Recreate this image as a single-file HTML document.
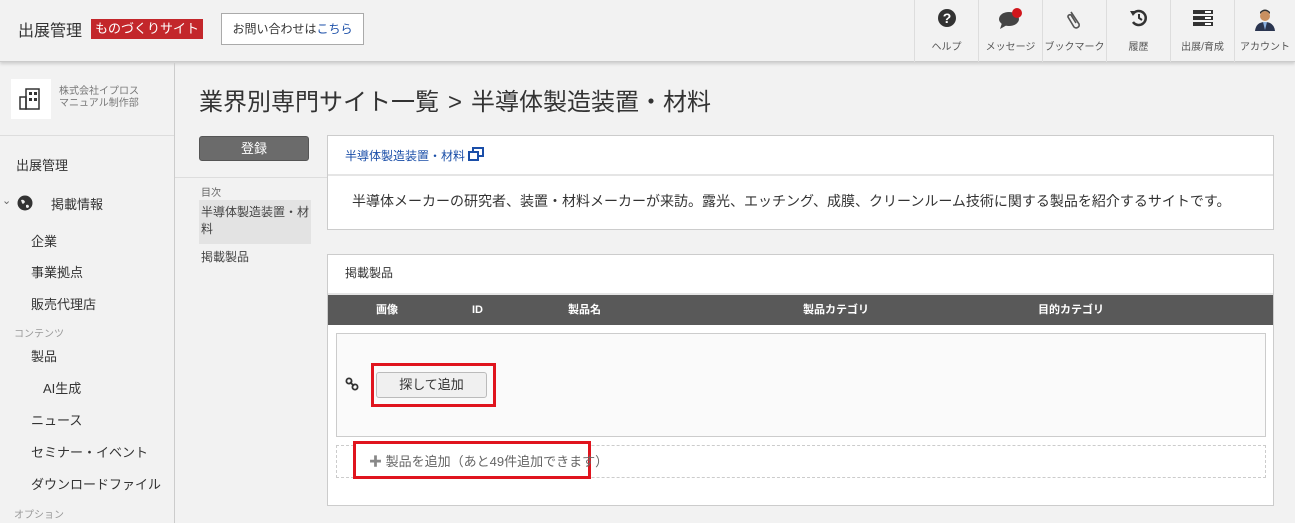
<!DOCTYPE html><html><head><meta charset="utf-8"><style>
*{margin:0;padding:0;box-sizing:border-box}
body{width:1295px;height:523px;overflow:hidden;background:#f2f2f2;font-family:"Liberation Sans","Noto Sans CJK JP",sans-serif;color:#333;position:relative}
.a{position:absolute;white-space:nowrap}
.hdr{left:0;top:0;width:1295px;height:62px;background:#f2f2f2;border-bottom:1px solid #ccc;box-shadow:0 2px 3px rgba(0,0,0,.15)}
.nav{top:0;height:62px;width:64px;border-left:1px solid #ddd;text-align:center;font-size:10px;color:#555}
.nav svg{position:absolute;left:50%;transform:translateX(-50%);top:8px}
.nav span{position:absolute;left:0;right:0;top:38px}
.side{font-size:13px;color:#333}
.panel{background:#fff;border:1px solid #ccc}
</style></head><body>
<div class="a hdr"></div>
<div class="a" style="left:18px;top:17px;font-size:16px;color:#333">出展管理</div>
<div class="a" style="left:91px;top:19px;width:112px;height:20px;background:#c3272b;color:#fff;font-size:13px;line-height:20px;text-align:center">ものづくりサイト</div>
<div class="a" style="left:221px;top:13px;width:143px;height:32px;background:#fff;border:1px solid #aaa;font-size:12px;line-height:30px;text-align:center;color:#333">お問い合わせは<span style="color:#1a4ea8">こちら</span></div>

<div class="a nav" style="left:914px"><svg width="20" height="20" viewBox="0 0 20 20"><circle cx="10" cy="10" r="9" fill="#333"/><text x="10" y="15" font-size="14" font-weight="bold" fill="#fff" text-anchor="middle" font-family="Liberation Sans">?</text></svg><span>ヘルプ</span></div>
<div class="a nav" style="left:978px"><svg width="26" height="22" viewBox="0 0 26 22"><ellipse cx="11" cy="11" rx="10" ry="7" fill="#444"/><path d="M4 15 L2 21 L9 17Z" fill="#444"/><circle cx="19" cy="5" r="5" fill="#d0161b"/></svg><span>メッセージ</span></div>
<div class="a nav" style="left:1042px"><svg width="20" height="22" viewBox="0 0 20 22"><path d="M6 4 L14 16 a3 3 0 0 1 -5 3 L3 9 a2 2 0 0 1 3 -2 L11 15" fill="none" stroke="#555" stroke-width="1.6"/></svg><span>ブックマーク</span></div>
<div class="a nav" style="left:1106px"><svg width="20" height="20" viewBox="0 0 20 20"><path d="M4 6 A7 7 0 1 1 4 14" fill="none" stroke="#333" stroke-width="2.5"/><path d="M1 3 L7 3 L4 8Z" fill="#333"/><path d="M10 6 V10 L13 12" fill="none" stroke="#333" stroke-width="2"/></svg><span>履歴</span></div>
<div class="a nav" style="left:1170px"><svg width="22" height="20" viewBox="0 0 22 20"><rect x="1" y="2" width="20" height="4" fill="#333"/><rect x="1" y="8" width="20" height="4" fill="#333"/><rect x="1" y="14" width="20" height="4" fill="#333"/><rect x="13" y="3" width="6" height="2" fill="#fff"/><rect x="13" y="9" width="6" height="2" fill="#fff"/><rect x="13" y="15" width="6" height="2" fill="#fff"/></svg><span>出展/育成</span></div>
<div class="a nav" style="left:1234px;width:61px"><svg width="24" height="24" viewBox="0 0 24 24"><circle cx="12" cy="8" r="5" fill="#c99060"/><path d="M7 6 Q12 0 17 6 L17 4 Q12 -1 7 4Z" fill="#333"/><path d="M2 23 Q3 14 12 14 Q21 14 22 23Z" fill="#2a3550"/><path d="M10 14 L12 22 L14 14Z" fill="#8ab0e0"/></svg><span>アカウント</span></div>

<div class="a" style="left:174px;top:63px;width:1px;height:460px;background:#ccc"></div>
<div class="a" style="left:11px;top:79px;width:40px;height:40px;background:#fff"><svg width="40" height="40" viewBox="0 0 40 40"><rect x="15" y="10" width="13" height="20" fill="none" stroke="#333" stroke-width="1.5"/><rect x="9" y="18" width="6" height="12" fill="none" stroke="#333" stroke-width="1.5"/><g fill="#333"><rect x="18" y="13" width="3" height="3"/><rect x="23" y="13" width="3" height="3"/><rect x="18" y="19" width="3" height="3"/><rect x="23" y="19" width="3" height="3"/></g></svg></div>
<div class="a" style="left:59px;top:86px;font-size:10px;color:#777;line-height:12px">株式会社イプロス<br>マニュアル制作部</div>
<div class="a" style="left:0;top:135px;width:174px;height:1px;background:#ddd"></div>
<div class="a side" style="left:16px;top:155px">出展管理</div>
<div class="a side" style="left:2px;top:194px;font-size:11px;color:#666">⌄</div>
<svg class="a" style="left:17px;top:195px" width="16" height="16" viewBox="0 0 16 16"><circle cx="8" cy="8" r="7.5" fill="#333"/><path d="M4 5 Q7 4 8 7 Q6 10 5 8Z M9 10 Q12 9 12 12 Q10 14 9 12Z" fill="#eee"/></svg>
<div class="a side" style="left:51px;top:194px">掲載情報</div>
<div class="a side" style="left:31px;top:231px">企業</div>
<div class="a side" style="left:31px;top:262px">事業拠点</div>
<div class="a side" style="left:31px;top:294px">販売代理店</div>
<div class="a" style="left:14px;top:325px;font-size:10px;color:#999">コンテンツ</div>
<div class="a side" style="left:31px;top:346px">製品</div>
<div class="a side" style="left:43px;top:378px">AI生成</div>
<div class="a side" style="left:31px;top:410px">ニュース</div>
<div class="a side" style="left:31px;top:442px">セミナー・イベント</div>
<div class="a side" style="left:31px;top:474px">ダウンロードファイル</div>
<div class="a" style="left:14px;top:506px;font-size:10px;color:#999">オプション</div>

<div class="a" style="left:199px;top:82px;font-size:24px;color:#333">業界別専門サイト一覧<span style="margin:0 9px">&gt;</span>半導体製造装置・材料</div>
<div class="a" style="left:199px;top:136px;width:110px;height:25px;background:#6b6b6b;border:1px solid #555;border-radius:3px;color:#fff;font-size:13px;line-height:23px;text-align:center">登録</div>
<div class="a" style="left:175px;top:177px;width:152px;height:1px;background:#ddd"></div>
<div class="a" style="left:201px;top:184px;font-size:10px;color:#666">目次</div>
<div class="a" style="left:199px;top:200px;width:112px;height:44px;background:#e3e3e3"></div>
<div class="a" style="left:201px;top:204px;font-size:12px;line-height:17px;color:#444;white-space:normal;width:108px">半導体製造装置・材料</div>
<div class="a" style="left:201px;top:248px;font-size:12px;color:#444">掲載製品</div>

<div class="a panel" style="left:327px;top:135px;width:947px;height:95px"></div>
<div class="a" style="left:328px;top:174px;width:945px;height:2px;background:#e5e5e5"></div>
<div class="a" style="left:345px;top:147px;font-size:12px;color:#1a4ea8">半導体製造装置・材料</div>
<svg class="a" style="left:468px;top:147px" width="16" height="14" viewBox="0 0 16 14"><rect x="5" y="1" width="10" height="8" fill="none" stroke="#1a4ea8" stroke-width="2"/><rect x="1" y="5" width="9" height="8" fill="#fff" stroke="#1a4ea8" stroke-width="2"/></svg>
<div class="a" style="left:352px;top:191px;font-size:14px;color:#333">半導体メーカーの研究者、装置・材料メーカーが来訪。露光、エッチング、成膜、クリーンルーム技術に関する製品を紹介するサイトです。</div>

<div class="a panel" style="left:327px;top:254px;width:947px;height:252px"></div>
<div class="a" style="left:345px;top:264px;font-size:12px;color:#333">掲載製品</div>
<div class="a" style="left:328px;top:293px;width:945px;height:2px;background:#e5e5e5"></div>
<div class="a" style="left:328px;top:295px;width:945px;height:30px;background:#595959;color:#fff;font-size:11px;font-weight:bold;line-height:30px">
<span class="a" style="left:48px;top:0">画像</span><span class="a" style="left:144px;top:0">ID</span><span class="a" style="left:240px;top:0">製品名</span><span class="a" style="left:475px;top:0">製品カテゴリ</span><span class="a" style="left:710px;top:0">目的カテゴリ</span></div>
<div class="a" style="left:336px;top:333px;width:930px;height:104px;background:#fafafa;border:1px solid #ccc"></div>
<svg class="a" style="left:345px;top:377px" width="14" height="14" viewBox="0 0 14 14"><circle cx="4" cy="4" r="2.6" fill="none" stroke="#333" stroke-width="1.8"/><circle cx="10" cy="10" r="2.6" fill="none" stroke="#333" stroke-width="1.8"/><path d="M5 5 L9 9" stroke="#333" stroke-width="1.8"/></svg>
<div class="a" style="left:371px;top:363px;width:125px;height:44px;border:3px solid #e0141e"></div>
<div class="a" style="left:376px;top:372px;width:111px;height:26px;background:#f0f0f0;border:1px solid #bbb;border-radius:3px;font-size:13px;line-height:24px;text-align:center;color:#333">探して追加</div>
<div class="a" style="left:336px;top:445px;width:930px;height:33px;border:1px dashed #ccc"></div>
<div class="a" style="left:353px;top:441px;width:238px;height:38px;border:3px solid #e0141e;background:#fff"></div>
<div class="a" style="left:369px;top:451px;font-size:13px;color:#666"><b style="color:#888">✚</b> 製品を追加（あと49件追加できます）</div>
</body></html>
